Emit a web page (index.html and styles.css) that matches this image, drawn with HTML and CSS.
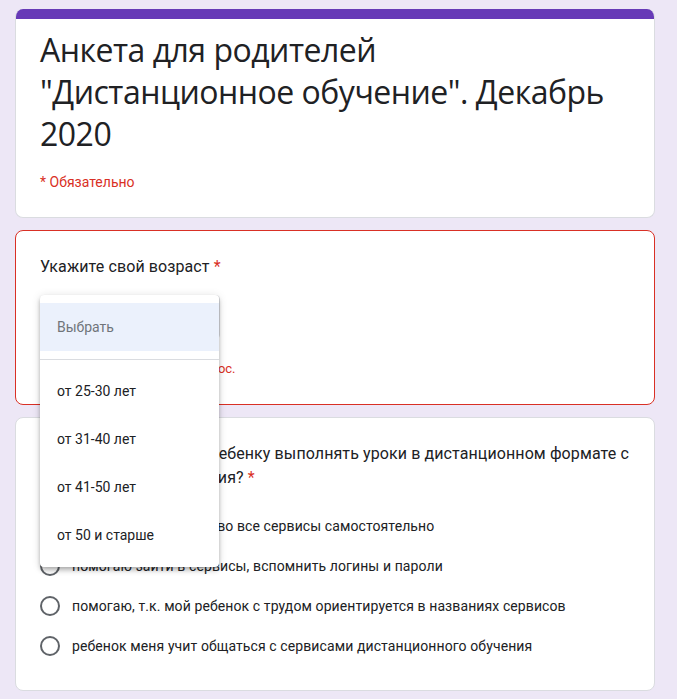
FILE: index.html
```html
<!DOCTYPE html>
<html lang="ru">

<head>
    <meta charset="UTF-8">
    <meta name="viewport" content="width=device-width, initial-scale=1.0">
    <title>Анкета для родителей</title>
    <link rel="stylesheet" href="styles.css">
</head>

<body>
    <div class="form">
        <!-- Header card -->
        <div class="card card-head">
            <div class="head-band"></div>
            <div class="head-body">
                <h1 class="form-title">Анкета для родителей "Дистанционное обучение". Декабрь 2020</h1>
                <div class="required-note">* Обязательно</div>
            </div>
        </div>

        <!-- Question 1: dropdown, opened -->
        <div class="card card-error question-open">
            <div class="q-title">Укажите свой возраст <span class="star">*</span></div>
            <div class="select-wrap">
                <div class="select-box">
                    <span>Выбрать</span>
                    <svg width="24" height="24" viewBox="0 0 24 24"><path d="M7 10l5 5 5-5z" fill="#5f6368" /></svg>
                </div>
                <div class="menu">
                    <div class="menu-item menu-placeholder">Выбрать</div>
                    <div class="menu-divider"></div>
                    <div class="menu-item">от 25-30 лет</div>
                    <div class="menu-item">от 31-40 лет</div>
                    <div class="menu-item">от 41-50 лет</div>
                    <div class="menu-item">от 50 и старше</div>
                </div>
            </div>
            <div class="error-row">
                <svg width="24" height="24" viewBox="0 0 24 24"><path d="M11 15h2v2h-2zm0-8h2v6h-2zm1-5C6.47 2 2 6.5 2 12a10 10 0 1 0 10-10zm0 18a8 8 0 1 1 0-16 8 8 0 0 1 0 16z" fill="#d93025" /></svg>
                <span>Это обязательный вопрос.</span>
            </div>
        </div>

        <!-- Question 2: radio -->
        <div class="card">
            <div class="q-title">Вы помогаете своему ребенку выполнять уроки в дистанционном формате с помощью видеообучения? <span class="star">*</span></div>
            <div class="options">
                <label class="option"><span class="radio"></span>мой ребенок заходит во все сервисы самостоятельно</label>
                <label class="option"><span class="radio"></span>помогаю зайти в сервисы, вспомнить логины и пароли</label>
                <label class="option"><span class="radio"></span>помогаю, т.к. мой ребенок с трудом ориентируется в названиях сервисов</label>
                <label class="option"><span class="radio"></span>ребенок меня учит общаться с сервисами дистанционного обучения</label>
            </div>
        </div>
    </div>
</body>

</html>
```

FILE: styles.css
```css
body {
    margin: 0;
    background-color: #ede7f6;
    font-family: Roboto, Arial, sans-serif;
    color: #202124;
}

.form {
    width: 640px;
    padding: 9px 0 20px 15px;
}

.card {
    position: relative;
    background: #fff;
    border: 1px solid #dadce0;
    border-radius: 8px;
    padding: 24px;
    margin-bottom: 12px;
}

.card-head {
    padding: 0;
    overflow: hidden;
    border-top: none;
}

.head-band {
    height: 10px;
    background-color: #673ab7;
}

.head-body {
    padding: 10px 24px 25px;
}

.form-title {
    margin: 0;
    font-family: "Open Sans", Roboto, sans-serif;
    font-weight: 400;
    font-size: 32px;
    line-height: 42px;
    letter-spacing: -0.5px;
}

.required-note {
    margin-top: 17px;
    font-size: 14px;
    line-height: 20px;
    color: #d93025;
}

.card-error {
    border-color: #d93025;
}

.question-open {
    z-index: 2;
}

.q-title {
    font-size: 16px;
    line-height: 24px;
    letter-spacing: 0.1px;
}

.star {
    color: #d93025;
}

/* closed select lies under the opened menu */
.select-wrap {
    position: relative;
    margin-top: 16px;
    width: 180px;
}

.select-box {
    display: flex;
    align-items: center;
    justify-content: space-between;
    height: 42px;
    padding: 0 8px 0 16px;
    border: 1px solid #dadce0;
    border-radius: 4px;
    font-size: 14px;
}

.menu {
    position: absolute;
    top: 0;
    left: 0;
    width: 179px;
    padding: 8px 0;
    background: #fff;
    border-radius: 4px;
    box-shadow: 0 2px 4px -1px rgba(0, 0, 0, 0.2), 0 4px 5px 0 rgba(0, 0, 0, 0.14), 0 1px 10px 0 rgba(0, 0, 0, 0.12);
}

.menu-item {
    height: 48px;
    line-height: 48px;
    padding-left: 17px;
    font-size: 14px;
    color: #202124;
}

.menu-placeholder {
    background-color: #ebf1fc;
    color: #70757a;
}

.menu-divider {
    height: 1px;
    margin: 8px 0 7px;
    background-color: #dadce0;
}

.error-row {
    display: flex;
    align-items: center;
    gap: 8px;
    margin-top: 17px;
    font-size: 13px;
    color: #d93025;
}

.options {
    margin-top: 16px;
}

.option {
    display: flex;
    align-items: center;
    height: 40px;
    font-size: 14px;
    letter-spacing: 0.1px;
}

.radio {
    box-sizing: border-box;
    width: 20px;
    height: 20px;
    margin-right: 12px;
    border: 2px solid #5f6368;
    border-radius: 50%;
    flex-shrink: 0;
}
```
